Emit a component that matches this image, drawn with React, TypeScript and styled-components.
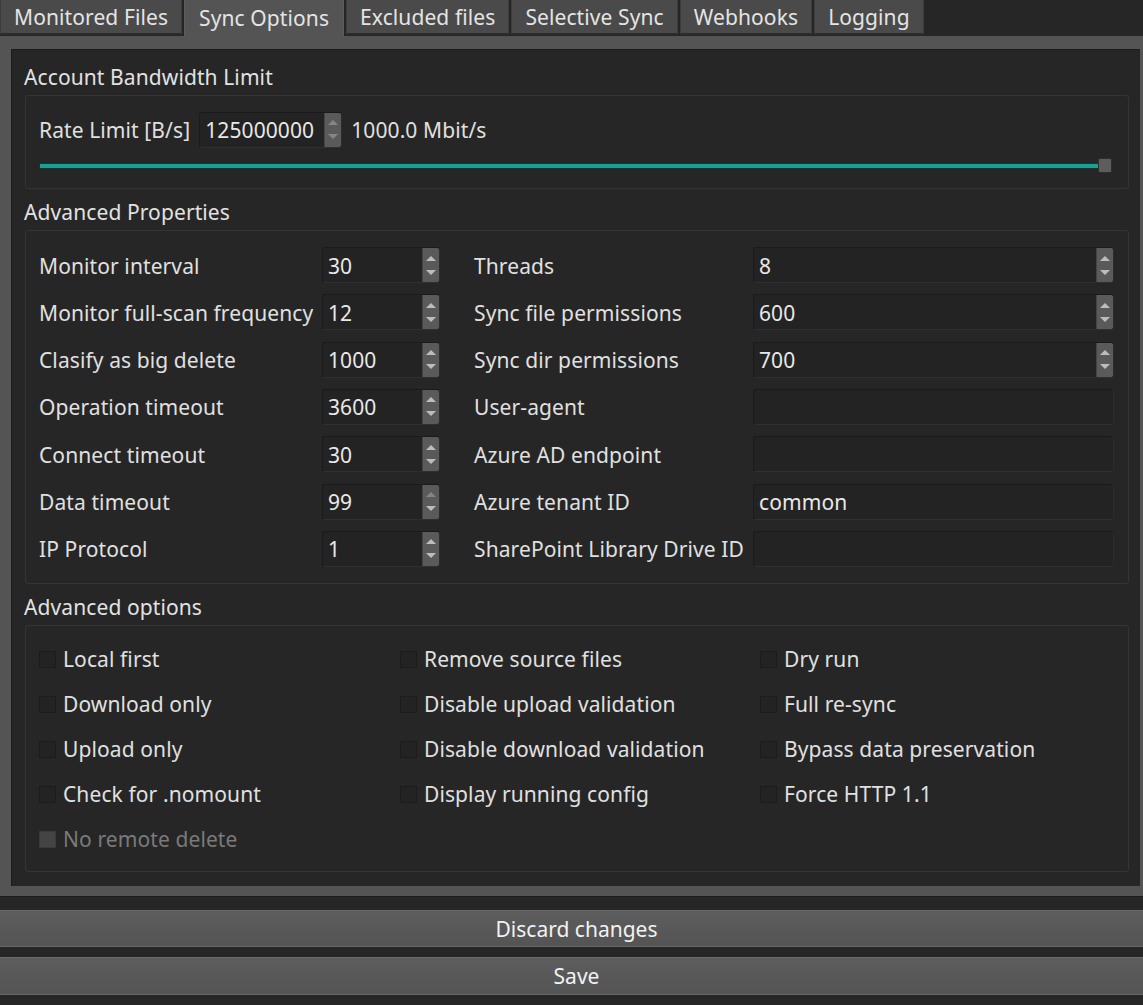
import React from 'react';
import styled, { createGlobalStyle } from 'styled-components';

const GlobalStyle = createGlobalStyle`
  html, body { margin: 0; padding: 0; background: #262626; }
  body {
    font-family: "Noto Sans", "DejaVu Sans", sans-serif;
    font-size: 21px;
    letter-spacing: 0.1px;
    color: #e0e0e0;
  }
  * { box-sizing: border-box; }
`;

const Window = styled.div`
  width: 1143px;
  height: 1005px;
  display: flex;
  flex-direction: column;
  background: #262626;
  overflow: hidden;
`;

const TabBar = styled.div`
  display: flex;
  gap: 2px;
  height: 36px;
  align-items: flex-start;
`;

const Tab = styled.div<{ $active?: boolean }>`
  height: ${(p) => (p.$active ? 36 : 35)}px;
  padding: 0 ${(p) => (p.$active ? 14 : 13)}px;
  display: flex;
  align-items: center;
  white-space: nowrap;
  line-height: 28px;
  color: #e4e4e4;
  background: ${(p) => (p.$active ? '#545454' : '#4a4a4a')};
  border-left: 1px solid ${(p) => (p.$active ? '#5c5c5c' : '#3c3c3c')};
  border-right: 1px solid ${(p) => (p.$active ? '#5c5c5c' : '#3c3c3c')};
  border-bottom: ${(p) => (p.$active ? 'none' : '2px solid #2c2c2c')};
`;

const Pane = styled.div`
  height: 861px;
  background: #545454;
  padding: 13px 3px 10px 11px;
`;

const Inner = styled.div`
  height: 100%;
  background: #262626;
  border-left: 1px solid #1b1b1b;
  border-top: 1px solid #1b1b1b;
  padding: 13px 11px 0 13px;
  display: flex;
  flex-direction: column;
`;

const Section = styled.section`
  display: flex;
  flex-direction: column;
  gap: 4px;
  & + & { margin-top: 9px; }
`;

const Title = styled.div`
  line-height: 28px;
  height: 28px;
  margin-left: -1px;
  color: #e2e2e2;
`;

const Box = styled.div<{ $h: number; $pad: string }>`
  height: ${(p) => p.$h}px;
  border: 1px solid #343434;
  border-radius: 3px;
  padding: ${(p) => p.$pad};
`;

const RateRow = styled.div`
  display: flex;
  align-items: center;
  height: 37px;
`;

const Label = styled.span<{ $indent?: number; $disabled?: boolean }>`
  line-height: 28px;
  padding-top: 1px;
  white-space: nowrap;
  padding-left: ${(p) => p.$indent ?? 0}px;
  color: ${(p) => (p.$disabled ? '#7a7a7a' : '#e0e0e0')};
`;

const UnitText = styled.span`
  margin-left: 9px;
  padding-top: 1px;
  line-height: 28px;
`;

const Field = styled.div<{ $w?: number; $ml?: number }>`
  width: ${(p) => (p.$w ? `${p.$w}px` : '100%')};
  margin-left: ${(p) => p.$ml ?? 0}px;
  height: 36px;
  display: flex;
  align-items: stretch;
  background: #232323;
  border: 1px solid #1b1b1b;
  border-bottom-color: #303030;
  border-right-color: #2c2c2c;
  border-radius: 3px;
  overflow: hidden;
`;

const FieldText = styled.div`
  flex: 1;
  padding: 1px 0 0 5px;
  display: flex;
  align-items: center;
  line-height: 28px;
  color: #e8e8e8;
`;

const SpinButtons = styled.div`
  width: 17px;
  background: #5a5a5a;
  border-left: 1px solid #444;
  display: flex;
  flex-direction: column;
`;

const SpinHalf = styled.div`
  flex: 1;
  display: flex;
  align-items: center;
  justify-content: center;
`;

const Arrow = styled.div<{ $down?: boolean; $dim?: boolean }>`
  width: 0;
  height: 0;
  border-left: 5px solid transparent;
  border-right: 5px solid transparent;
  ${(p) =>
    p.$down
      ? `border-top: 5px solid ${p.$dim ? '#858585' : '#bdbdbd'}; margin-bottom: 3px;`
      : `border-bottom: 5px solid ${p.$dim ? '#858585' : '#bdbdbd'}; margin-top: 3px;`}
`;

const SliderRow = styled.div`
  margin-top: 10px;
  height: 15px;
  display: flex;
  align-items: center;
  padding-left: 1px;
`;

const Track = styled.div`
  flex: 1;
  height: 4px;
  background: #18a192;
  box-shadow: 0 0 0 1px #173532;
`;

const Handle = styled.div`
  width: 14px;
  height: 15px;
  margin-left: -1px;
  background: #5d5d5d;
  border: 1px solid #2f2f2f;
  border-radius: 2px;
`;

const PropGrid = styled.div`
  display: grid;
  grid-template-columns: 283px 118px 313px 1fr;
  grid-auto-rows: 36px;
  row-gap: 11.33px;
  align-items: center;
`;

const OptionGrid = styled.div`
  display: grid;
  grid-template-columns: 361px 360px 1fr;
  grid-auto-rows: 29px;
  row-gap: 16px;
`;

const Option = styled.label`
  display: flex;
  align-items: center;
  gap: 7px;
`;

const Check = styled.span<{ $disabled?: boolean }>`
  width: 17px;
  height: 17px;
  margin-top: 1px;
  background: ${(p) => (p.$disabled ? '#444444' : '#232323')};
  border: 1px solid ${(p) => (p.$disabled ? '#3a3a3a' : '#1c1c1c')};
`;

const Footer = styled.div`
  display: flex;
  flex-direction: column;
  gap: 10px;
  padding: 13px 0 10px;
  border-top: 1px solid #1c1c1c;
`;

const Button = styled.button<{ $h: number }>`
  height: ${(p) => p.$h}px;
  width: 100%;
  font: inherit;
  color: #f2f2f2;
  background: linear-gradient(#5d5d5d, #545454);
  border: none;
  border-top: 1px solid #6a6a6a;
  border-bottom: 1px solid #686868;
  line-height: 28px;
  padding: 0 0 0 10px;
`;

const SpinBox = ({ value, w, ml, upDim, downDim }: { value: string; w?: number; ml?: number; upDim?: boolean; downDim?: boolean }) => (
  <Field $w={w} $ml={ml}>
    <FieldText>{value}</FieldText>
    <SpinButtons>
      <SpinHalf>
        <Arrow $dim={upDim} />
      </SpinHalf>
      <SpinHalf>
        <Arrow $down $dim={downDim} />
      </SpinHalf>
    </SpinButtons>
  </Field>
);

const LineEdit = ({ value }: { value: string }) => (
  <Field>
    <FieldText>{value}</FieldText>
  </Field>
);

const tabs = ['Monitored Files', 'Sync Options', 'Excluded files', 'Selective Sync', 'Webhooks', 'Logging'];

type Right = { label: string; value: string; spin: boolean };
const props: { label: string; value: string; upDim?: boolean; right: Right }[] = [
  { label: 'Monitor interval', value: '30', right: { label: 'Threads', value: '8', spin: true } },
  { label: 'Monitor full-scan frequency', value: '12', right: { label: 'Sync file permissions', value: '600', spin: true } },
  { label: 'Clasify as big delete', value: '1000', right: { label: 'Sync dir permissions', value: '700', spin: true } },
  { label: 'Operation timeout', value: '3600', right: { label: 'User-agent', value: '', spin: false } },
  { label: 'Connect timeout', value: '30', right: { label: 'Azure AD endpoint', value: '', spin: false } },
  { label: 'Data timeout', value: '99', upDim: true, right: { label: 'Azure tenant ID', value: 'common', spin: false } },
  { label: 'IP Protocol', value: '1', right: { label: 'SharePoint Library Drive ID', value: '', spin: false } },
];

const options: { label: string; disabled?: boolean }[] = [
  { label: 'Local first' },
  { label: 'Remove source files' },
  { label: 'Dry run' },
  { label: 'Download only' },
  { label: 'Disable upload validation' },
  { label: 'Full re-sync' },
  { label: 'Upload only' },
  { label: 'Disable download validation' },
  { label: 'Bypass data preservation' },
  { label: 'Check for .nomount' },
  { label: 'Display running config' },
  { label: 'Force HTTP 1.1' },
  { label: 'No remote delete', disabled: true },
];

export default function App() {
  return (
    <Window>
      <GlobalStyle />
      <TabBar>
        {tabs.map((t) => (
          <Tab key={t} $active={t === 'Sync Options'}>
            {t}
          </Tab>
        ))}
      </TabBar>
      <Pane>
        <Inner>
          <Section>
            <Title>Account Bandwidth Limit</Title>
            <Box $h={94} $pad="15px 16px 0 13px">
              <RateRow>
                <Label>Rate Limit [B/s]</Label>
                <SpinBox value="125000000" w={143} ml={9} upDim downDim />
                <UnitText>1000.0 Mbit/s</UnitText>
              </RateRow>
              <SliderRow>
                <Track />
                <Handle />
              </SliderRow>
            </Box>
          </Section>
          <Section>
            <Title>Advanced Properties</Title>
            <Box $h={354} $pad="16px 14px 0 13px">
              <PropGrid>
                {props.map((p) => (
                  <React.Fragment key={p.label}>
                    <Label>{p.label}</Label>
                    <SpinBox value={p.value} upDim={p.upDim} />
                    <Label $indent={34}>{p.right.label}</Label>
                    {p.right.spin ? <SpinBox value={p.right.value} /> : <LineEdit value={p.right.value} />}
                  </React.Fragment>
                ))}
              </PropGrid>
            </Box>
          </Section>
          <Section>
            <Title>Advanced options</Title>
            <Box $h={247} $pad="18px 14px 0 13px">
              <OptionGrid>
                {options.map((o) => (
                  <Option key={o.label}>
                    <Check $disabled={o.disabled} />
                    <Label $disabled={o.disabled}>{o.label}</Label>
                  </Option>
                ))}
              </OptionGrid>
            </Box>
          </Section>
        </Inner>
      </Pane>
      <Footer>
        <Button $h={37}>Discard changes</Button>
        <Button $h={38}>Save</Button>
      </Footer>
    </Window>
  );
}
